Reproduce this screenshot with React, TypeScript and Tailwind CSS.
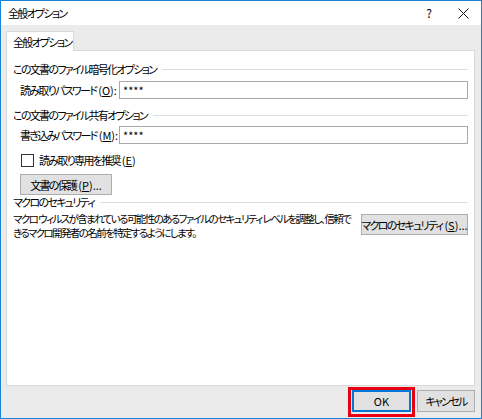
import React from 'react';

const font = { fontFamily: '"Noto Sans CJK JP", "Liberation Sans", sans-serif', fontFeatureSettings: '"palt"' };

// ASCII parts of a label keep normal spacing
const Key = ({ k, tail = '' }: { k: string; tail?: string }) => (
  <span className="tracking-normal ml-[2px]">
    (<span className="underline">{k}</span>){tail}
  </span>
);

const GroupLabel = ({ children }: { children: React.ReactNode }) => (
  <div className="flex items-center gap-[6px] h-[16px]">
    <span className="whitespace-nowrap">{children}</span>
    <div className="flex-1 h-px bg-[#d5dfe5]" />
  </div>
);

const PasswordRow = ({ label, u }: { label: string; u: string }) => (
  <div className="flex items-center h-[18px] pl-[7px]">
    <span className="w-[99px] whitespace-nowrap">
      {label}
      <Key k={u} tail=":" />
    </span>
    <div className="flex-1 h-[18px] border border-[#a9a9a9] bg-white flex items-center pl-[3px] text-[11px] leading-none tracking-normal">
      ****
    </div>
  </div>
);

export default function App() {
  return (
    <div
      className="w-[482px] h-[419px] border border-[#1883d7] bg-white flex flex-col text-[11px] tracking-[-1.7px] leading-[16px] text-black"
      style={font}
    >
      <div className="h-[24px] flex items-center pl-[7px] pr-[12px] bg-white">
        <span className="flex-1">全般オプション</span>
        <span className="w-[12px] text-center mr-[23px] text-[12px] tracking-normal">?</span>
        <svg width="11" height="11" viewBox="0 0 11 11">
          <path d="M0.5 0.5 L10.5 10.5 M10.5 0.5 L0.5 10.5" stroke="#111" strokeWidth="1" />
        </svg>
      </div>

      <div className="flex-1 bg-[#ebebeb] pl-[5px] pr-[6px] pt-[6px] flex flex-col">
        <div className="self-start w-[68px] h-[20px] border border-b-0 border-[#d9d9d9] bg-white pl-[6px] flex items-center relative z-10 -mb-px">
          全般オプション
        </div>
        <div className="flex-1 bg-white border border-[#d9d9d9] pl-[6px] pr-[6px] pt-[10px] flex flex-col">
          <GroupLabel>この文書のファイル暗号化オプション</GroupLabel>
          <div className="mt-[4px]">
            <PasswordRow label="読み取りパスワード" u="O" />
          </div>
          <div className="mt-[8px]">
            <GroupLabel>この文書のファイル共有オプション</GroupLabel>
          </div>
          <div className="mt-[3px]">
            <PasswordRow label="書き込みパスワード" u="M" />
          </div>
          <div className="mt-[9px] flex items-center pl-[8px] h-[14px]">
            <div className="w-[13px] h-[13px] border border-[#333] bg-white" />
            <span className="ml-[5px] whitespace-nowrap">
              読み取り専用を推奨
              <Key k="E" />
            </span>
          </div>
          <div className="mt-[7px] pl-[7px]">
            <button className="w-[92px] h-[21px] bg-[#e1e1e1] border border-[#adadad] flex items-center justify-center whitespace-nowrap">
              文書の保護
              <Key k="P" tail="..." />
            </button>
          </div>
          <div className="mt-[-1px]">
            <GroupLabel>マクロのセキュリティ</GroupLabel>
          </div>
          <div className="mt-[2px] flex items-start gap-[6px]">
            <p className="flex-1 min-w-0 leading-[14px] whitespace-nowrap text-[10.5px] tracking-[-1.6px]">
              マクロ&nbsp;ウィルスが含まれている可能性のあるファイルのセキュリティ&nbsp;レベルを調整し、信頼で
              <br />
              きるマクロ開発者の名前を特定するようにします。
            </p>
            <button className="w-[107px] h-[21px] shrink-0 bg-[#e1e1e1] border border-[#adadad] flex items-center justify-center mt-[2px] whitespace-nowrap">
              マクロのセキュリティ
              <Key k="S" tail="..." />
            </button>
          </div>
        </div>

        <div className="h-[32px] flex justify-end items-start pt-[1px] gap-[2px]">
          <div className="w-[67px] h-[30px] border-[3px] border-[#e60012] flex items-start justify-center">
            <button className="w-[59px] h-[22px] bg-[#e1e1e1] border-2 border-[#0078d7] flex items-center justify-center tracking-normal">
              OK
            </button>
          </div>
          <button className="mt-[3px] w-[58px] h-[22px] bg-[#e1e1e1] border border-[#adadad] flex items-center justify-center whitespace-nowrap">
            キャンセル
          </button>
        </div>
      </div>
    </div>
  );
}
